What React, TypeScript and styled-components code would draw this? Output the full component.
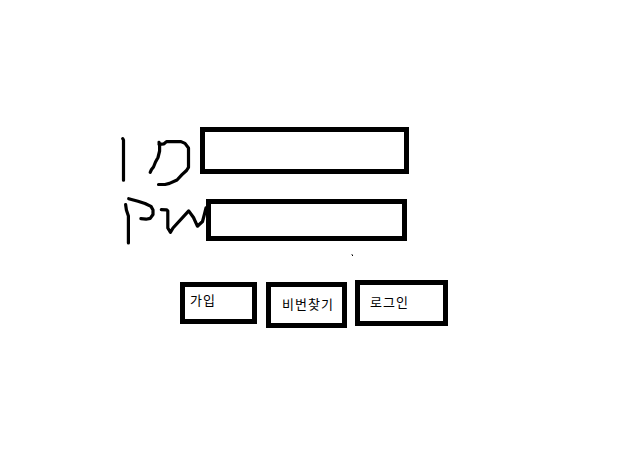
import React from "react";
import styled, { createGlobalStyle } from "styled-components";

const GlobalStyle = createGlobalStyle`
  * { box-sizing: border-box; }
  body { margin: 0; background: #fff; }
`;

const Page = styled.main`
  display: flex;
  flex-direction: column;
  width: 632px;
  height: 472px;
  padding: 127px 0 0 120px;
  overflow: hidden;
  background: #fff;
  color: #000;
  font-family: "Noto Sans CJK KR", sans-serif;
`;

const Field = styled.label<{ $height: number }>`
  display: flex;
  align-items: flex-start;
  height: ${(p) => p.$height}px;
`;

const Handwriting = styled.svg`
  flex: none;
  overflow: visible;
  fill: none;
  stroke: #000;
  stroke-width: 3.2;
  stroke-linecap: round;
  stroke-linejoin: round;
`;

const Input = styled.input<{ $width: number; $height: number }>`
  width: ${(p) => p.$width}px;
  height: ${(p) => p.$height}px;
  margin: 0;
  padding: 0 8px;
  border: 5px solid #000;
  border-radius: 0;
  outline: none;
  background: #fff;
  font: inherit;
`;

const Speck = styled.svg`
  flex: none;
  margin: 13px 0 0 231px;
`;

const Actions = styled.div`
  display: flex;
  align-items: flex-start;
  margin: 24px 0 0 60px;
`;

const Button = styled.button<{
  $width: number;
  $height: number;
  $top: number;
  $gap: number;
  $inset: string;
}>`
  flex: none;
  display: flex;
  align-items: flex-start;
  width: ${(p) => p.$width}px;
  height: ${(p) => p.$height}px;
  margin: ${(p) => p.$top}px ${(p) => p.$gap}px 0 0;
  padding: ${(p) => p.$inset};
  border: 5px solid #000;
  border-radius: 0;
  background: #fff;
  color: #000;
  font: 400 13px/16px "Noto Sans CJK KR", sans-serif;
  letter-spacing: 1.04px;
  white-space: nowrap;
`;

export default function App() {
  return (
    <>
      <GlobalStyle />
      <Page>
        <Field $height={72}>
          <Handwriting width="80" height="60" viewBox="120 127 80 60" role="img" aria-label="ID">
            <path d="M122.7 138.7L123.5 140V180.2" />
            <path d="M159 142.3L159.6 144V151L158 157.5L155.5 162L153.5 167L151.5 169.5L150.2 172.4" />
            <path d="M159 144.3L164 143.8L166.5 141.6H181L185 143.4L188.5 148V167.3L186.5 170.5L182 174.7L177 180L169.5 183.4L165 184.5H158.5" />
          </Handwriting>
          <Input $width={209} $height={47} type="text" aria-label="ID" />
        </Field>
        <Field $height={42}>
          <Handwriting width="86" height="42" viewBox="120 199 86 42" role="img" aria-label="PW">
            <path d="M125.6 204.6L126.4 210L128.4 216V243" />
            <path d="M128.7 198.7L138 201.2L145 203.5L151 206.4L153 210V214.5L150.2 218.4L146 219.2L140.9 218.7" />
            <path d="M161.3 209.6L166.5 209.8L167.8 211V228L170.5 232.3L173 228L188.7 210.9L193.5 217.5L197.4 226.2L202.5 221.5L204.5 214L206 208" />
          </Handwriting>
          <Input $width={201} $height={42} type="password" aria-label="PW" />
        </Field>
        <Speck width="2" height="2" viewBox="0 0 2 2" aria-hidden="true">
          <path d="M0 0H2V1H0Z" fill="#999" />
          <path d="M1 1H2V2H1Z" fill="#000" />
        </Speck>
        <Actions>
          <Button $width={77} $height={42} $top={2} $gap={9} $inset="5px 0 0 5px">가입</Button>
          <Button $width={81} $height={46} $top={2} $gap={8} $inset="9px 0 0 11px">비번찾기</Button>
          <Button $width={93} $height={46} $top={0} $gap={0} $inset="9px 0 0 10px">로그인</Button>
        </Actions>
      </Page>
    </>
  );
}
